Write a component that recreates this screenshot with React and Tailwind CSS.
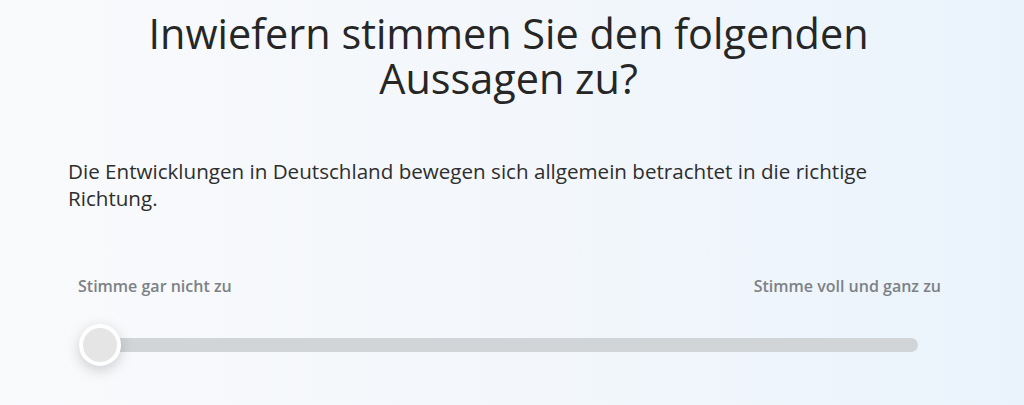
import React from "react";

export default function App() {
  return (
    <div
      className="w-full h-[405px] overflow-hidden bg-gradient-to-r from-[#f9fafc] via-[#f3f7fb] to-[#eaf3fc] text-[#2a2a2a]"
      style={{ fontFamily: '"Open Sans", "Noto Sans", sans-serif' }}
    >
      <h1 className="pt-[11px] text-center text-[41.4px] leading-[45px] font-normal text-[#262626] pl-[133px] pr-[140px]">
        Inwiefern stimmen Sie den folgenden Aussagen zu?
      </h1>
      <p className="mt-[57px] pl-[68px] pr-[120px] text-[20.6px] leading-[27px] text-[#2e2e2e]">
        Die Entwicklungen in Deutschland bewegen sich allgemein betrachtet in die richtige Richtung.
      </p>
      <div className="mt-[64px] ml-[78px] w-[863px] flex justify-between text-[16px] leading-[21px] font-semibold text-[#7d8186]">
        <span>Stimme gar nicht zu</span>
        <span>Stimme voll und ganz zu</span>
      </div>
      <div className="mt-[27px] ml-[79px] w-[839px] relative h-[42px] flex items-center">
        <div className="h-[14px] w-full rounded-full bg-[#d2d5d8]" />
        <div className="absolute left-0 top-0 w-[42px] h-[42px] rounded-full border-[4px] border-white bg-[#e5e5e5] shadow-[0_4px_14px_rgba(0,0,0,0.18)]" />
      </div>
    </div>
  );
}
